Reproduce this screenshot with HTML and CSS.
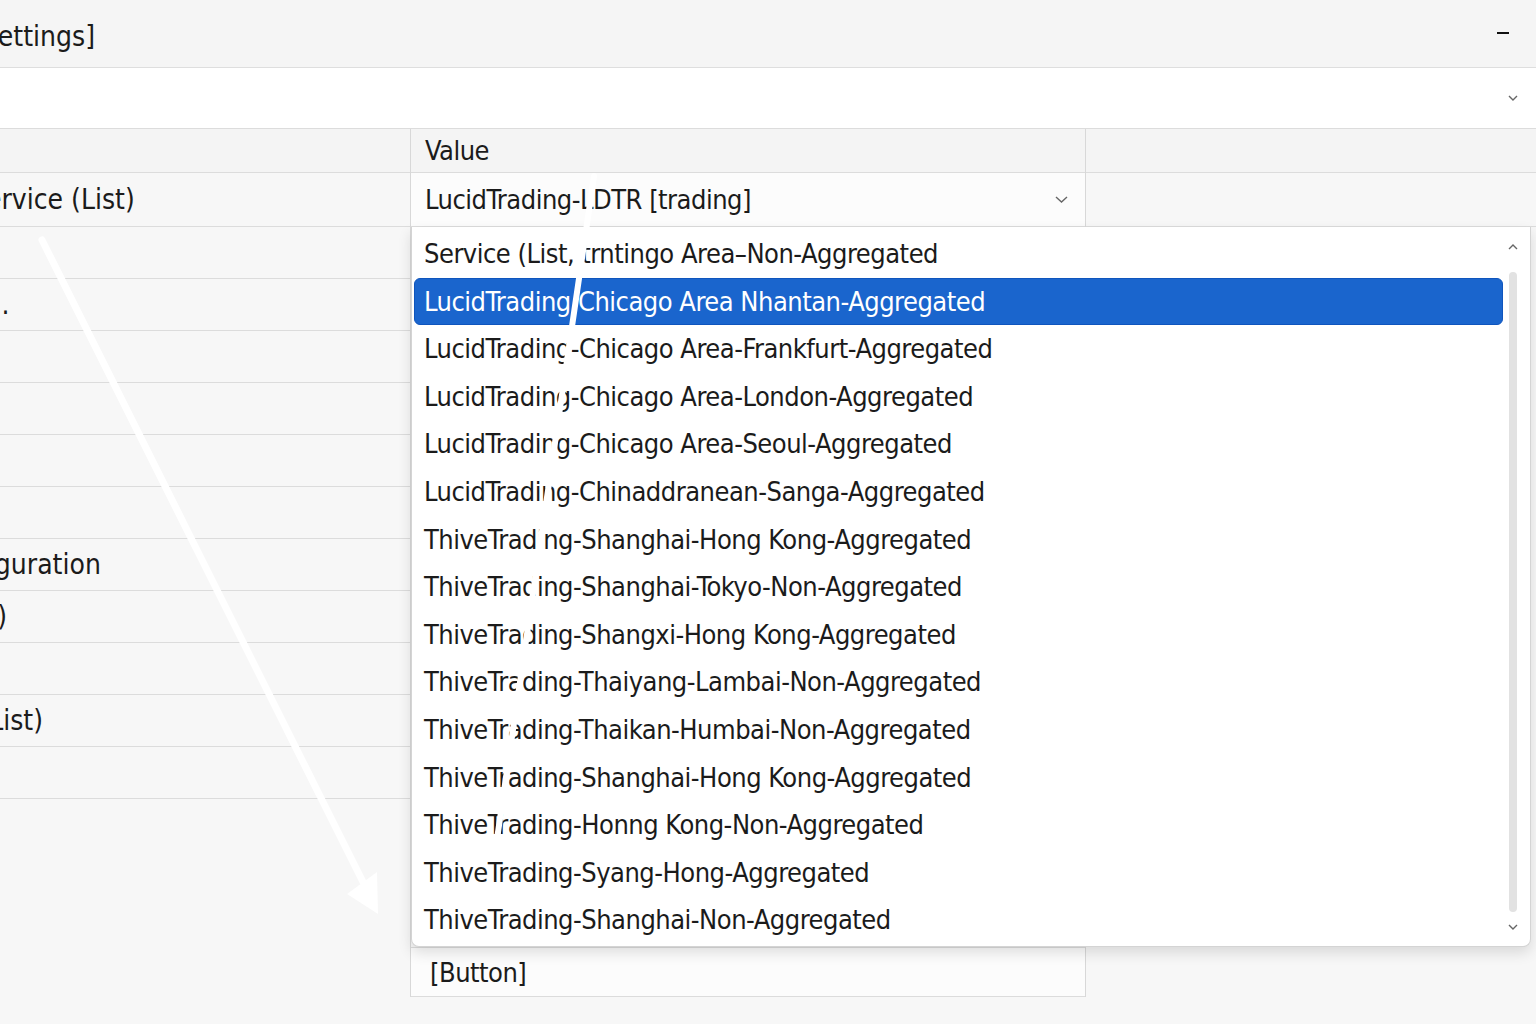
FILE: index.html
```html
<!DOCTYPE html>
<html lang="en">
<head>
    <meta charset="UTF-8">
    <title>Service Settings</title>
    <link rel="stylesheet" href="styles.css">
</head>
<body>
    <div class="window">
        <header class="titlebar">
            <span class="title">[Settings]</span>
            <button class="min-btn" title="Minimize"></button>
        </header>
        <div class="filter">
            <svg class="chev" width="10" height="6" viewBox="0 0 10 6"><polyline points="1,1 5,5 9,1"/></svg>
        </div>
        <div class="grid">
            <div class="col names">
                <div class="cell head"></div>
                <div class="cell first prop">Service (List)</div>
                <div class="cell"></div>
                <div class="cell prop">Sa.</div>
                <div class="cell"></div>
                <div class="cell"></div>
                <div class="cell"></div>
                <div class="cell"></div>
                <div class="cell cat">Configuration</div>
                <div class="cell cat">(Type)</div>
                <div class="cell"></div>
                <div class="cell cat">Set (List)</div>
                <div class="cell"></div>
            </div>
            <div class="col values">
                <div class="cell head">Value</div>
                <div class="cell first select">
                    <span>LucidTrading-LDTR [trading]</span>
                    <svg class="chev" width="13" height="7" viewBox="0 0 13 7"><polyline points="1,1 6.5,6 12,1"/></svg>
                </div>
                <div class="under">
                    <div class="dropdown">
                        <ul class="options">
                            <li>Service (List, trntingo Area–Non-Aggregated</li>
                            <li class="selected">LucidTrading Chicago Area Nhantan-Aggregated</li>
                            <li>LucidTrading-Chicago Area-Frankfurt-Aggregated</li>
                            <li>LucidTrading-Chicago Area-London-Aggregated</li>
                            <li>LucidTrading-Chicago Area-Seoul-Aggregated</li>
                            <li>LucidTrading-Chinaddranean-Sanga-Aggregated</li>
                            <li>ThiveTrading-Shanghai-Hong Kong-Aggregated</li>
                            <li>ThiveTrading-Shanghai-Tokyo-Non-Aggregated</li>
                            <li>ThiveTrading-Shangxi-Hong Kong-Aggregated</li>
                            <li>ThiveTrading-Thaiyang-Lambai-Non-Aggregated</li>
                            <li>ThiveTrading-Thaikan-Humbai-Non-Aggregated</li>
                            <li>ThiveTrading-Shanghai-Hong Kong-Aggregated</li>
                            <li>ThiveTrading-Honng Kong-Non-Aggregated</li>
                            <li>ThiveTrading-Syang-Hong-Aggregated</li>
                            <li>ThiveTrading-Shanghai-Non-Aggregated</li>
                        </ul>
                        <div class="scroll">
                            <svg class="chev" width="10" height="6" viewBox="0 0 10 6"><polyline points="1,5 5,1 9,5"/></svg>
                            <div class="track"></div>
                            <svg class="chev" width="10" height="6" viewBox="0 0 10 6"><polyline points="1,1 5,5 9,1"/></svg>
                        </div>
                    </div>
                </div>
                <div class="cell button-cell">[Button]</div>
            </div>
            <div class="col rest">
                <div class="cell head"></div>
                <div class="cell first"></div>
            </div>
        </div>
    </div>

    <!-- stray white strokes that lie over the screen -->
    <svg class="strokes" width="1536" height="1024" viewBox="0 0 1536 1024">
        <line x1="42" y1="240" x2="368" y2="892" stroke="#fff" stroke-width="7" stroke-linecap="round"/>
        <polygon points="347,894 377,872 378,914" fill="#fff"/>
        <line x1="594" y1="176" x2="496" y2="846" stroke="#fff" stroke-width="6" stroke-linecap="round"/>
    </svg>
</body>
</html>
```

FILE: styles.css
```css
body {
    margin: 0;
    background-color: #f7f7f7;
    font-family: "Liberation Sans Narrow", "DejaVu Sans Condensed", sans-serif;
    color: #1b1b1b;
    overflow: hidden;
    position: relative;
}

.window {
    margin-left: -70px;
}

.titlebar {
    height: 68px;
    box-sizing: border-box;
    background-color: #f5f5f5;
    border-bottom: 1px solid #dedede;
    display: flex;
    align-items: center;
    justify-content: space-between;
    padding: 5px 27px 0 42px;
    font-size: 28px;
}

.min-btn {
    width: 12px;
    height: 2px;
    padding: 0;
    margin-top: -6px;
    border: none;
    background-color: #111;
}

.filter {
    height: 61px;
    box-sizing: border-box;
    background-color: #fff;
    border-bottom: 1px solid #dcdcdc;
    display: flex;
    align-items: center;
    justify-content: flex-end;
    padding-right: 18px;
}

.chev polyline {
    fill: none;
    stroke: #666;
    stroke-width: 1.4;
}

.grid {
    display: flex;
}

.names {
    width: 480px;
}

.values {
    width: 676px;
    box-sizing: border-box;
    border-left: 1px solid #d8d8d8;
    border-right: 1px solid #d8d8d8;
}

.rest {
    flex: 1;
}

.cell {
    height: 52px;
    box-sizing: border-box;
    border-bottom: 1px solid #dcdcdc;
    display: flex;
    align-items: center;
    font-size: 28px;
    white-space: nowrap;
}

.cell.head {
    height: 44px;
    background-color: #f4f4f4;
}

.cell.first {
    height: 54px;
}

.prop {
    padding-left: 40px;
}

.cat {
    padding-left: 0;
}

.values .cell {
    padding-left: 14px;
    font-size: 27px;
    letter-spacing: -0.5px;
}

.select {
    background-color: #fcfcfc;
    justify-content: space-between;
    padding-right: 17px;
}

.under {
    height: 720px;
    position: relative;
}

.dropdown {
    position: absolute;
    top: 0;
    left: 0;
    width: 1120px;
    height: 720px;
    box-sizing: border-box;
    background-color: #fff;
    border: 1px solid #d4d4d4;
    border-top: none;
    border-radius: 0 0 8px 8px;
    box-shadow: 0 6px 14px rgba(0, 0, 0, 0.12);
    display: flex;
    z-index: 2;
}

.options {
    flex: 1;
    list-style: none;
    margin: 0;
    padding: 3px 0 0 2px;
}

.options li {
    height: 47.6px;
    line-height: 47.6px;
    padding-left: 10px;
    font-size: 27px;
    letter-spacing: -0.5px;
    white-space: nowrap;
}

.options li.selected {
    background-color: #1a65cd;
    border: 1px solid #0f55bd;
    border-radius: 6px;
    color: #fff;
    box-sizing: border-box;
    line-height: 45px;
    padding-left: 9px;
}

.scroll {
    width: 27px;
    display: flex;
    flex-direction: column;
    align-items: flex-start;
    padding-left: 5px;
    box-sizing: border-box;
    padding-top: 17px;
}

.track {
    width: 8px;
    height: 640px;
    margin: 22px 0 12px 1px;
    background-color: #e2e2e2;
    border-radius: 4px;
}

.button-cell {
    height: 50px;
    background-color: #fcfcfc;
    border-top: 1px solid #dcdcdc;
}

.values .button-cell {
    padding-left: 19px;
}

.strokes {
    position: absolute;
    top: 0;
    left: 0;
    pointer-events: none;
    z-index: 5;
}
```
